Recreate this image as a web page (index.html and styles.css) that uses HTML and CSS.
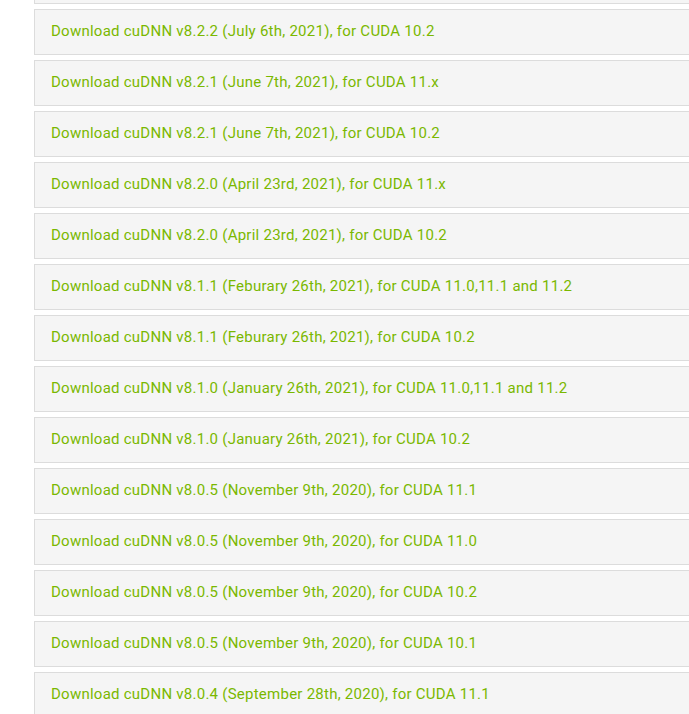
FILE: index.html
```html
<!DOCTYPE html>
<html lang="en">
<head>
  <meta charset="UTF-8">
  <meta name="viewport" content="width=device-width, initial-scale=1.0">
  <title>cuDNN Archive</title>
  <link rel="stylesheet" href="styles.css">
</head>
<body>

<div class="archive">
  <div class="download"></div>
  <a class="download" href="#">Download cuDNN v8.2.2 (July 6th, 2021), for CUDA 10.2</a>
  <a class="download" href="#">Download cuDNN v8.2.1 (June 7th, 2021), for CUDA 11.x</a>
  <a class="download" href="#">Download cuDNN v8.2.1 (June 7th, 2021), for CUDA 10.2</a>
  <a class="download" href="#">Download cuDNN v8.2.0 (April 23rd, 2021), for CUDA 11.x</a>
  <a class="download" href="#">Download cuDNN v8.2.0 (April 23rd, 2021), for CUDA 10.2</a>
  <a class="download" href="#">Download cuDNN v8.1.1 (Feburary 26th, 2021), for CUDA 11.0,11.1 and 11.2</a>
  <a class="download" href="#">Download cuDNN v8.1.1 (Feburary 26th, 2021), for CUDA 10.2</a>
  <a class="download" href="#">Download cuDNN v8.1.0 (January 26th, 2021), for CUDA 11.0,11.1 and 11.2</a>
  <a class="download" href="#">Download cuDNN v8.1.0 (January 26th, 2021), for CUDA 10.2</a>
  <a class="download" href="#">Download cuDNN v8.0.5 (November 9th, 2020), for CUDA 11.1</a>
  <a class="download" href="#">Download cuDNN v8.0.5 (November 9th, 2020), for CUDA 11.0</a>
  <a class="download" href="#">Download cuDNN v8.0.5 (November 9th, 2020), for CUDA 10.2</a>
  <a class="download" href="#">Download cuDNN v8.0.5 (November 9th, 2020), for CUDA 10.1</a>
  <a class="download" href="#">Download cuDNN v8.0.4 (September 28th, 2020), for CUDA 11.1</a>
</div>

</body>
</html>
```

FILE: styles.css
```css
html, body {
  margin: 0;
  padding: 0;
  background: #fff;
  overflow: hidden;
}
body {
  font-family: "Roboto", "Liberation Sans", sans-serif;
}
.archive {
  display: flex;
  flex-direction: column;
  gap: 5px;
  margin-top: -42px;
  margin-left: 34px;
  width: 720px;
}
.download {
  display: flex;
  align-items: center;
  box-sizing: border-box;
  height: 46px;
  padding: 0 16px 2px;
  background: #f5f5f5;
  border: 1px solid #dcdcdc;
  color: #7ab800;
  font-size: 15px;
  letter-spacing: 0.25px;
  text-decoration: none;
}
```
